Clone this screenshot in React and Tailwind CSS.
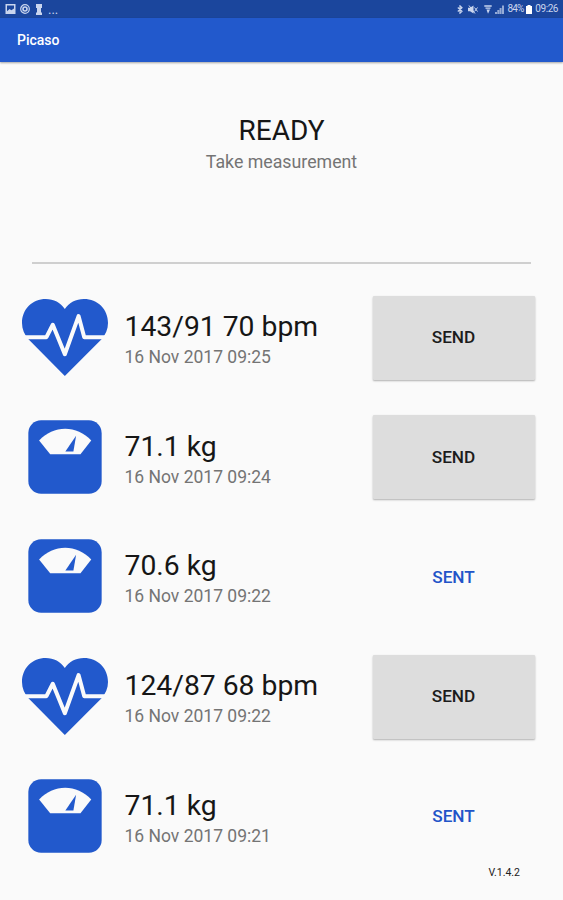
import React from 'react';

const measurements = [
  { id: 1, type: 'heart', value: '143/91 70 bpm', date: '16 Nov 2017 09:25', sent: false },
  { id: 2, type: 'scale', value: '71.1 kg', date: '16 Nov 2017 09:24', sent: false },
  { id: 3, type: 'scale', value: '70.6 kg', date: '16 Nov 2017 09:22', sent: true },
  { id: 4, type: 'heart', value: '124/87 68 bpm', date: '16 Nov 2017 09:22', sent: false },
  { id: 5, type: 'scale', value: '71.1 kg', date: '16 Nov 2017 09:21', sent: true },
];

const HeartIcon = () => (
  <svg className="-mt-[1px] w-[86px] h-[77px]" viewBox="35 40 257 230" fill="none">
    <path
      d="M163 270 L55 161 C42 147 35 131 35 112 C35 70 66 40 106 40 C130 40 150 50 163 70 C176 50 196 40 220 40 C261 40 292 70 292 112 C292 131 285 147 272 161 Z"
      fill="#2259cc"
    />
    <path
      d="M34 154 H108 L127 117 L163 205 L204 91 L221 154 H293"
      stroke="#fafafa"
      strokeWidth="12"
      strokeLinejoin="round"
    />
  </svg>
);

const ScaleIcon = () => (
  <svg className="-mt-[1px] w-[74px] h-[74px]" viewBox="53 30 220 220" fill="none">
    <rect x="54" y="31" width="218" height="218" rx="38" fill="#2259cc" />
    <path d="M86 91 C128 44 199 44 241 91 L209 132 H119 Z" fill="#fafafa" />
    <path d="M196 77 L188 124 H164 Z" fill="#2259cc" />
  </svg>
);

const StatusBar = () => (
  <div className="flex items-center justify-between h-[18px] bg-[#1b469d] pl-[5px] pr-[5px] text-[#c9d5ee]">
    <div className="flex items-center h-full">
      <svg className="w-[11px] h-[10px]" viewBox="0 0 11 10">
        <path d="M.5 0h10v10H.5zM2 1.500v5.700L4.600 5l1.700 1.300 2.700-1.700V1.500z" fill="currentColor" fillRule="evenodd" />
      </svg>
      <svg className="ml-[4px] w-[10px] h-[10px]" viewBox="0 0 10 10" fill="none" stroke="currentColor">
        <circle cx="5" cy="5" r="4.300" strokeWidth="1.200" />
        <circle cx="5" cy="5" r="2" strokeWidth="1.600" />
      </svg>
      <svg className="ml-[5px] w-[8px] h-[11px]" viewBox="0 0 8 11" fill="currentColor">
        <path d="M1 0h6v4H6v4.500h1V11H1V8.500H2V4H1z" />
      </svg>
      <span className="ml-[5px] text-[13px] leading-none">...</span>
    </div>
    <div className="flex items-center h-full">
      <svg className="w-[6px] h-[9px]" viewBox="0 0 6 9" fill="none" stroke="currentColor">
        <path d="M.8 2.500L5 6.300 3 8.200V.8L5 2.700.8 6.500" strokeWidth="1.200" />
      </svg>
      <svg className="ml-[5px] w-[10px] h-[9px]" viewBox="0 0 10 9" fill="currentColor">
        <path d="M0 2.800h2L5.500.5v8L2 6.200H0z" />
        <path d="M6.500 2.500l3 4M9.500 2.500l-3 4M1 .5l6 8" stroke="currentColor" fill="none" />
      </svg>
      <svg className="ml-[6px] w-[8px] h-[9px]" viewBox="0 0 8 9" fill="none" stroke="currentColor">
        <path d="M.3 1h7.400M1.500 3.200h5" strokeWidth="1.300" />
        <path d="M2.500 4.500h3.500L4 8.700z" fill="currentColor" stroke="none" />
      </svg>
      <svg className="ml-[3px] w-[9px] h-[9px]" viewBox="0 0 9 9" fill="currentColor">
        <path d="M0 7h2v2H0zM2.300 5h2v4h-2zM4.600 3h2v6h-2zM7 .5h2V9H7z" opacity="0.7" />
      </svg>
      <span className="ml-[3px] text-[10px] leading-none tracking-[-0.9px]">84%</span>
      <svg className="ml-[3px] w-[6px] h-[9px]" viewBox="0 0 6 9" fill="#ffffff">
        <path d="M0 1h1.500V0h3v1H6v8H0z" />
      </svg>
      <span className="ml-[3px] text-[10px] leading-none tracking-[-0.450px]">09:26</span>
    </div>
  </div>
);

const MeasurementRow = ({ item }) => (
  <div className="flex items-center h-[119.6px] pl-[21px] pr-[28px]">
    <div className="flex justify-center w-[87px]">
      {item.type === 'heart' ? <HeartIcon /> : <ScaleIcon />}
    </div>
    <div className="flex-1 ml-[16.500px] pt-[5px] whitespace-nowrap">
      <div className="text-[28.300px] leading-[34px] text-[#161616]">{item.value}</div>
      <div className="text-[17.500px] leading-[26px] text-[#747474]">{item.date}</div>
    </div>
    {item.sent ? (
      <div className="w-[162px] pr-[1px] pt-[1px] text-center text-[17.200px] font-medium text-[#2254c8]">SENT</div>
    ) : (
      <button className="w-[162px] h-[84px] pr-[1px] pt-[1px] rounded-[1px] bg-[#dddddd] text-[17.200px] font-medium text-[#1c1c1c] shadow-[0_1px_2px_rgba(0,0,0,0.3)]">
        SEND
      </button>
    )}
  </div>
);

const App = () => {
  return (
    <div className="w-[563px] h-[900px] overflow-hidden bg-[#fafafa] font-['Roboto',sans-serif]">
      <StatusBar />
      <header className="flex items-center h-[44px] pl-[17px] bg-[#2259cc] text-[14px] font-medium text-white shadow-[0_1px_2px_rgba(0,0,0,0.35)]">
        Picaso
      </header>

      {/* Current state */}
      <div className="h-[202px] mx-[32px] pt-[52px] border-b-2 border-[#cfcfcf] text-center">
        <div className="text-[28px] leading-[34px] text-[#161616]">READY</div>
        <div className="text-[17.750px] leading-[28px] text-[#747474]">Take measurement</div>
      </div>

      {/* Measurements */}
      <div className="pt-[14px]">
        {measurements.map((item) => (
          <MeasurementRow key={item.id} item={item} />
        ))}
      </div>

      <div className="-mt-[10px] pr-[43px] text-right text-[10.500px] leading-[14px] text-[#222222]">V.1.4.2</div>
    </div>
  );
};

export default App;
